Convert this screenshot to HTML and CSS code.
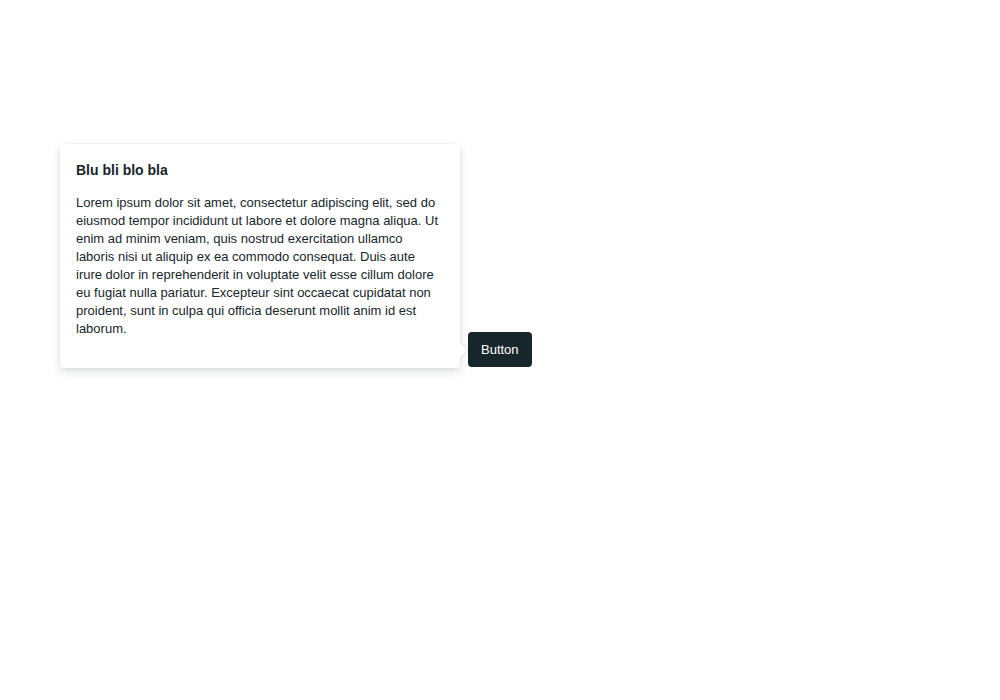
FILE: index.html
```html
<!DOCTYPE html>
<html>
<head>
<meta charset="utf-8">
<link rel="stylesheet" href="styles.css">
</head>
<body>
<div class="stage">
  <div class="popover">
    <h3 class="popover-title">Blu bli blo bla</h3>
    <p class="popover-body">Lorem ipsum dolor sit amet, consectetur adipiscing elit, sed do eiusmod tempor incididunt ut labore et dolore magna aliqua. Ut enim ad minim veniam, quis nostrud exercitation ullamco laboris nisi ut aliquip ex ea commodo consequat. Duis aute irure dolor in reprehenderit in voluptate velit esse cillum dolore eu fugiat nulla pariatur. Excepteur sint occaecat cupidatat non proident, sunt in culpa qui officia deserunt mollit anim id est laborum.</p>
    <span class="popover-arrow"></span>
  </div>
  <button class="btn">Button</button>
</div>
</body>
</html>
```
FILE: styles.css
```css
html, body {
  margin: 0;
  padding: 0;
  background: #ffffff;
  font-family: "Liberation Sans", Arial, sans-serif;
  color: #17262b;
}
.stage {
  display: flex;
  align-items: flex-end;
  gap: 8px;
  padding: 144px 0 40px 60px;
}
.popover {
  position: relative;
  width: 400px;
  box-sizing: border-box;
  padding: 16px 16px 30px 16px;
  background: #ffffff;
  border-radius: 4px;
  box-shadow: 0 4px 10px rgba(23, 38, 43, 0.14), 0 0 3px rgba(23, 38, 43, 0.06);
}
.popover-title {
  margin: 0 0 14px 0;
  font-size: 14px;
  line-height: 20px;
  font-weight: bold;
}
.popover-body {
  margin: 0;
  font-size: 13px;
  line-height: 18px;
}
.popover-arrow {
  position: absolute;
  right: -5px;
  bottom: 13px;
  width: 10px;
  height: 10px;
  background: #ffffff;
  transform: rotate(45deg);
  box-shadow: 2px -2px 3px rgba(23, 38, 43, 0.06);
}
.btn {
  margin-bottom: 1px;
  height: 35px;
  padding: 0 13px;
  border: none;
  border-radius: 4px;
  background: #17262b;
  color: #ffffff;
  font-family: "Liberation Sans", Arial, sans-serif;
  font-size: 13px;
}
```
